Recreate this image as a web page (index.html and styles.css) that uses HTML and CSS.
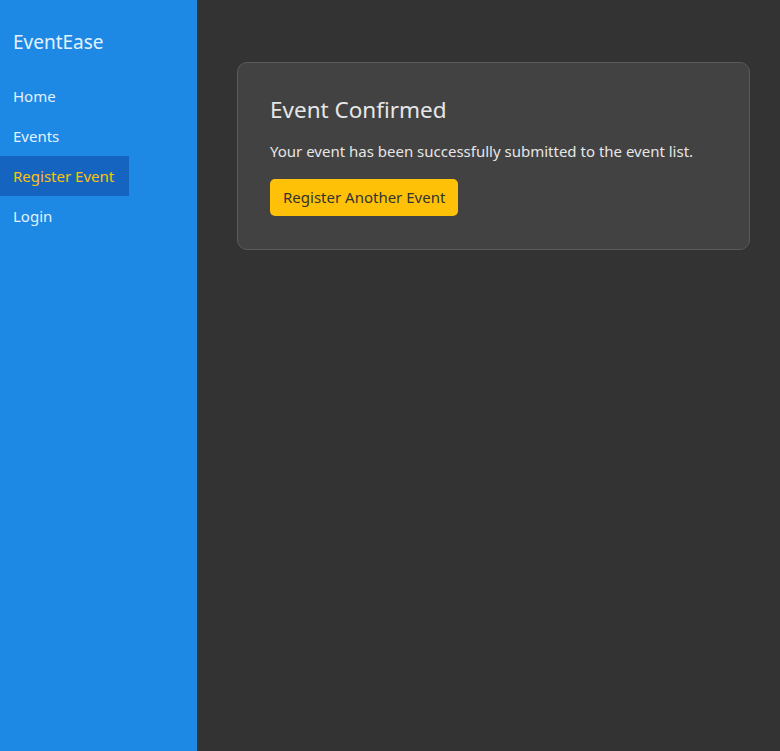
FILE: index.html
```html
<!DOCTYPE html>
<html lang="en">
<head>
<meta charset="utf-8">
<title>EventEase</title>
<link rel="stylesheet" href="styles.css">
</head>
<body>
<div class="app">
  <aside class="sidebar">
    <div class="brand">EventEase</div>
    <nav class="nav">
      <a class="nav-link" href="#">Home</a>
      <a class="nav-link" href="#">Events</a>
      <a class="nav-link active" href="#">Register Event</a>
      <a class="nav-link" href="#">Login</a>
    </nav>
  </aside>
  <main class="main">
    <section class="card">
      <h1 class="card-title">Event Confirmed</h1>
      <p class="card-text">Your event has been successfully submitted to the event list.</p>
      <button class="btn" type="button">Register Another Event</button>
    </section>
  </main>
</div>
</body>
</html>
```
FILE: styles.css
```css
* { box-sizing: border-box; }
html, body { margin: 0; padding: 0; height: 100%; }
body {
  font-family: "Noto Sans", "Open Sans", sans-serif;
  background: #333333;
  color: #e6e6e6;
}
.app {
  display: flex;
  min-height: 100vh;
}
.sidebar {
  width: 197px;
  flex-shrink: 0;
  background: #1e88e5;
  padding-top: 29px;
}
.brand {
  font-size: 19px;
  color: #e3f2fd;
  padding-left: 13px;
  line-height: 26px;
  margin-bottom: 21px;
}
.nav {
  display: flex;
  flex-direction: column;
  align-items: flex-start;
}
.nav-link {
  display: block;
  font-size: 15px;
  line-height: 20px;
  padding: 10px 15px 10px 13px;
  color: #e3f2fd;
  text-decoration: none;
}
.nav-link.active {
  background: #1565c0;
  color: #ffc107;
}
.main {
  flex: 1;
  padding: 62px 30px 0 40px;
}
.card {
  background: #424242;
  border: 1px solid #5a5a5a;
  border-radius: 10px;
  padding: 32px 32px 33px 32px;
}
.card-title {
  margin: 0 0 16px;
  font-size: 22.5px;
  font-weight: 400;
  line-height: 30px;
  color: #e6e6e6;
}
.card-text {
  margin: 0 0 18px;
  font-size: 15px;
  line-height: 20px;
  color: #e6e6e6;
}
.btn {
  font-family: inherit;
  font-size: 15px;
  line-height: 21px;
  padding: 8px 13px;
  background: #ffc107;
  color: #333333;
  border: none;
  border-radius: 5px;
  cursor: pointer;
}
```
